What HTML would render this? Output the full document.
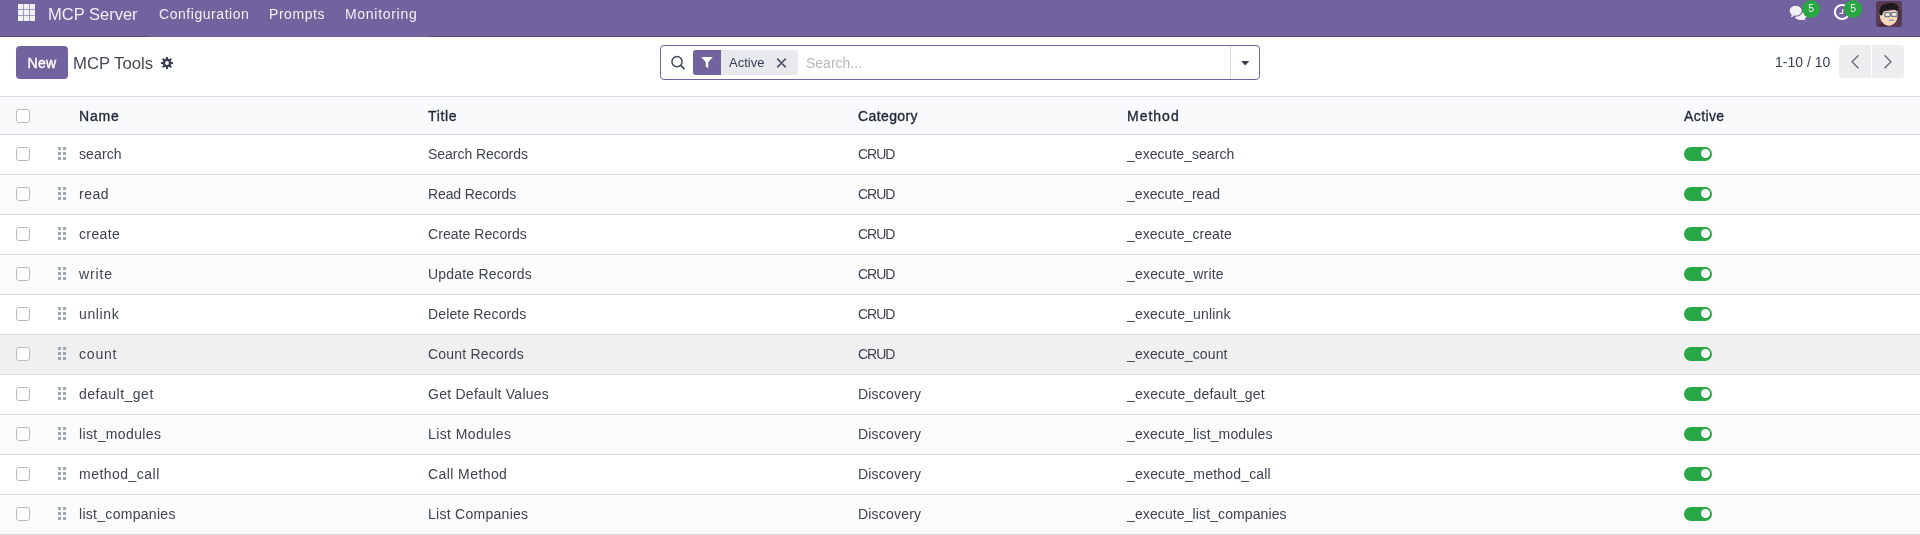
<!DOCTYPE html>
<html><head><meta charset="utf-8">
<style>
*{margin:0;padding:0;box-sizing:border-box}
html,body{width:1920px;height:535px;overflow:hidden;background:#fff;font-family:"Liberation Sans",sans-serif;color:#3d4450}
.abs{position:absolute}
div{will-change:transform}
#nav{position:absolute;left:0;top:0;width:1920px;height:37px;background:#71639e}
#navline1{position:absolute;left:0;top:36px;width:149px;height:1px;background:#594d84}
#navline2{position:absolute;left:428px;top:36px;width:1492px;height:1px;background:#594d84}
.navt{position:absolute;top:0px;height:36px;line-height:28px;color:#f1f0f5;white-space:nowrap}
.t{position:absolute;white-space:nowrap;font-size:14px;line-height:40px;height:40px;color:#3d4450}
.hd{position:absolute;white-space:nowrap;font-size:14px;letter-spacing:0.4px;will-change:transform;-webkit-text-stroke:0.35px #1f2937;color:#1f2937;line-height:37px;top:98px}
.row{position:absolute;left:0;width:1920px;height:40px;border-bottom:1px solid #d6dbe2}
.cb{position:absolute;left:16px;width:14px;height:14px;border:1px solid #b8bbc0;border-radius:3px;background:#fff}
.drag{position:absolute;left:58px;width:9px;height:13px}
.tog{position:absolute;left:1684px;width:28px;height:14px;border-radius:7px;background:#28a745}
.tog::after{content:"";position:absolute;left:16.6px;top:2.3px;width:9.2px;height:9.2px;border-radius:50%;background:#fff}
</style></head>
<body>
<div id="nav"></div>
<div id="navline1"></div><div id="navline2"></div>
<!-- apps grid -->
<svg class="abs" style="left:18px;top:4px" width="18" height="18" viewBox="0 0 18 18"><g fill="#f1f1f4"><rect x="0.00" y="0.00" width="5.3" height="5.3"/><rect x="5.85" y="0.00" width="5.3" height="5.3"/><rect x="11.70" y="0.00" width="5.3" height="5.3"/><rect x="0.00" y="5.85" width="5.3" height="5.3"/><rect x="5.85" y="5.85" width="5.3" height="5.3"/><rect x="11.70" y="5.85" width="5.3" height="5.3"/><rect x="0.00" y="11.70" width="5.3" height="5.3"/><rect x="5.85" y="11.70" width="5.3" height="5.3"/><rect x="11.70" y="11.70" width="5.3" height="5.3"/></g></svg>
<div class="navt" style="left:47.5px;top:0;font-size:16.5px">MCP Server</div>
<div class="navt" style="left:159px;font-size:14px;letter-spacing:0.55px">Configuration</div>
<div class="navt" style="left:269px;font-size:14px;letter-spacing:0.55px">Prompts</div>
<div class="navt" style="left:345px;font-size:14px;letter-spacing:0.7px">Monitoring</div>

<!-- right icons -->
<svg class="abs" style="left:1788px;top:4px" width="20" height="18" viewBox="0 0 20 18">
<g fill="#f0eff5">
<ellipse cx="12.6" cy="12" rx="6" ry="4"/>
<path d="M15 14.5 L18.6 16.6 L12.5 15.6 Z"/>
</g>
<g fill="#f0eff5" stroke="#71639e" stroke-width="1.1">
<path d="M3.6 10.6 L2.2 14.3 L7 12 Z"/>
<ellipse cx="7.65" cy="6.75" rx="6.6" ry="5.5"/>
</g>
<path d="M3.9 10.3 L2.9 13.3 L6.6 11.4 Z" fill="#f0eff5"/>
</svg>
<div class="abs" style="left:1802px;top:0px;width:18.4px;height:18px;border-radius:9.2px;background:#28a745;color:#f4f4f4;font-size:10.5px;line-height:17px;text-align:center">5</div>
<svg class="abs" style="left:1833px;top:3px" width="18" height="18" viewBox="0 0 18 18">
<circle cx="9" cy="9" r="7.1" fill="none" stroke="#fff" stroke-width="2"/>
<path d="M9.6 6 V10.3 H6.3" fill="none" stroke="#eeeaf4" stroke-width="1.3"/>
</svg>
<div class="abs" style="left:1844px;top:0px;width:18.4px;height:18px;border-radius:9.2px;background:#28a745;color:#f4f4f4;font-size:10.5px;line-height:17px;text-align:center">5</div>
<svg class="abs" style="left:1876px;top:1px" width="26" height="26" viewBox="0 0 26 26">
<rect x="0" y="0" width="26" height="26" rx="2.5" fill="#5b3b54"/>
<path d="M19 14 L25 8 L25 20 Z M3 24 L9 19 L11 26 L3 26Z" fill="#4a2f45"/>
<path d="M4 11 Q2.8 17.5 7 22 Q10 25.3 13.5 24.8 Q18.5 24 21 18.5 Q22.6 13 21.6 8.5 Z" fill="#f5d6bd"/>
<path d="M3.6 14 Q2.6 6.5 6.5 3.8 Q10.5 1.6 16 2 Q21.5 2.4 22.6 6 L22.2 11 Q20 8 15 8.5 Q10 8.4 7.5 10.5 L6 14.5 Z" fill="#1f1a1e"/>
<g fill="none" stroke="#707e8a" stroke-width="1.3"><rect x="8.8" y="11.6" width="5.4" height="4" rx="1"/><rect x="15.3" y="11.4" width="5.8" height="4" rx="1"/><path d="M14.2 13 H15.3"/></g>
<rect x="10" y="12.6" width="3" height="2" fill="#e8eef2"/><rect x="16.6" y="12.4" width="3.2" height="2" fill="#e8eef2"/>
<path d="M12.8 19.3 H18" stroke="#8f959a" stroke-width="1.3"/>
</svg>

<!-- control panel -->
<div class="abs" style="left:16px;top:46px;width:52px;height:33px;border-radius:4px;background:#71639e;color:#fff;font-size:14px;-webkit-text-stroke:0.4px #fff;letter-spacing:0.25px;line-height:35px;text-align:center">New</div>
<div class="abs" style="left:73px;top:47px;height:33px;line-height:33px;font-size:16.7px;color:#434a55;white-space:nowrap">MCP Tools</div>
<svg class="abs" style="left:161px;top:57px" width="12" height="12" viewBox="0 0 12 12">
<g fill="#374151"><circle cx="6" cy="6" r="4.4"/>
<rect x="5" y="0" width="2" height="12"/><rect x="5" y="0" width="2" height="12" transform="rotate(45 6 6)"/><rect x="5" y="0" width="2" height="12" transform="rotate(90 6 6)"/><rect x="5" y="0" width="2" height="12" transform="rotate(135 6 6)"/></g>
<circle cx="6" cy="6" r="1.9" fill="#fff"/>
</svg>

<!-- search -->
<div class="abs" style="left:660px;top:45px;width:600px;height:35px;border:1px solid #71639e;border-radius:4px"></div>
<div class="abs" style="left:1230px;top:46px;width:1px;height:33px;background:#d8dadd"></div>
<svg class="abs" style="left:670px;top:55px" width="16" height="16" viewBox="0 0 16 16">
<circle cx="7" cy="6.6" r="5.1" fill="none" stroke="#374151" stroke-width="1.4"/>
<path d="M10.7 10.3 L14.4 14.1" stroke="#374151" stroke-width="1.6"/>
</svg>
<div class="abs" style="left:693px;top:50px;width:105px;height:25px;border-radius:3px;background:#e7e9ed"></div>
<div class="abs" style="left:693px;top:50px;width:28px;height:25px;border-radius:3px 0 0 3px;background:#71639e"></div>
<svg class="abs" style="left:701px;top:57px" width="12" height="12" viewBox="0 0 12 12">
<path fill="#fff" d="M0.3 0 H11.7 L7.2 5.2 V11.3 L4.8 9.6 V5.2 Z"/>
</svg>
<div class="abs" style="left:729px;top:50px;height:25px;line-height:25px;font-size:13px;color:#374151">Active</div>
<svg class="abs" style="left:776px;top:58px" width="11" height="10" viewBox="0 0 11 10">
<path d="M1.2 0.6 L9.8 9.4 M9.8 0.6 L1.2 9.4" stroke="#555b66" stroke-width="1.7"/>
</svg>
<div class="abs" style="left:806px;top:47px;height:33px;line-height:33px;font-size:14px;color:#b4b8bf">Search...</div>
<svg class="abs" style="left:1241px;top:60px" width="9" height="6" viewBox="0 0 9 6">
<path fill="#3b4048" d="M0.1 1 H8.3 L4.2 5.4 Z"/>
</svg>

<!-- pager -->
<div class="abs" style="left:1775px;top:46px;height:33px;line-height:33px;font-size:14px;color:#374151;white-space:nowrap">1-10 / 10</div>
<div class="abs" style="left:1839px;top:45px;width:65px;height:33px;border-radius:4px;background:#eceef0"></div>
<div class="abs" style="left:1871px;top:45px;width:1px;height:33px;background:#fff"></div>
<svg class="abs" style="left:1850px;top:55px" width="10" height="15" viewBox="0 0 10 15">
<path d="M8.5 0.3 L2 6.8 L8.5 13.3" fill="none" stroke="#63666d" stroke-width="1.3"/>
</svg>
<svg class="abs" style="left:1883px;top:55px" width="10" height="15" viewBox="0 0 10 15">
<path d="M1.5 0.3 L8 6.8 L1.5 13.3" fill="none" stroke="#63666d" stroke-width="1.3"/>
</svg>

<!-- table header -->
<div class="abs" style="left:0;top:96px;width:1920px;height:39px;background:#f9fafb;border-top:1px solid #d6dbe2;border-bottom:1px solid #d6dbe2"></div>
<div class="cb" style="top:109px"></div>
<div class="hd" style="left:78.8px;letter-spacing:0.8px">Name</div>
<div class="hd" style="left:428px;letter-spacing:0.65px">Title</div>
<div class="hd" style="left:858px">Category</div>
<div class="hd" style="left:1127px;letter-spacing:1px">Method</div>
<div class="hd" style="left:1684px">Active</div>

<!--ROWS-->
<div class="row" style="top:135px;background:#fff"></div>
<div class="cb" style="top:147px"></div>
<svg class="drag" style="top:147px" width="9" height="13"><g fill="#9fa7b1"><rect x="0" y="0" width="3" height="3"/><rect x="5" y="0" width="3" height="3"/><rect x="0" y="5" width="3" height="3"/><rect x="5" y="5" width="3" height="3"/><rect x="0" y="10" width="3" height="3"/><rect x="5" y="10" width="3" height="3"/></g></svg>
<div class="t" id="t0_0" style="left:79px;top:134px;letter-spacing:0.120px">search</div>
<div class="t" id="t0_1" style="left:428px;top:134px;letter-spacing:-0.031px">Search Records</div>
<div class="t" id="t0_2" style="left:858px;top:134px;letter-spacing:-1.000px">CRUD</div>
<div class="t" id="t0_3" style="left:1127px;top:134px;letter-spacing:0.043px">_execute_search</div>
<div class="tog" style="top:147px"></div>
<div class="row" style="top:175px;background:#fbfbfb"></div>
<div class="cb" style="top:187px"></div>
<svg class="drag" style="top:187px" width="9" height="13"><g fill="#9fa7b1"><rect x="0" y="0" width="3" height="3"/><rect x="5" y="0" width="3" height="3"/><rect x="0" y="5" width="3" height="3"/><rect x="5" y="5" width="3" height="3"/><rect x="0" y="10" width="3" height="3"/><rect x="5" y="10" width="3" height="3"/></g></svg>
<div class="t" id="t1_0" style="left:79px;top:174px;letter-spacing:0.533px">read</div>
<div class="t" id="t1_1" style="left:428px;top:174px;letter-spacing:-0.109px">Read Records</div>
<div class="t" id="t1_2" style="left:858px;top:174px;letter-spacing:-1.000px">CRUD</div>
<div class="t" id="t1_3" style="left:1127px;top:174px;letter-spacing:0.033px">_execute_read</div>
<div class="tog" style="top:187px"></div>
<div class="row" style="top:215px;background:#fff"></div>
<div class="cb" style="top:227px"></div>
<svg class="drag" style="top:227px" width="9" height="13"><g fill="#9fa7b1"><rect x="0" y="0" width="3" height="3"/><rect x="5" y="0" width="3" height="3"/><rect x="0" y="5" width="3" height="3"/><rect x="5" y="5" width="3" height="3"/><rect x="0" y="10" width="3" height="3"/><rect x="5" y="10" width="3" height="3"/></g></svg>
<div class="t" id="t2_0" style="left:79px;top:214px;letter-spacing:0.360px">create</div>
<div class="t" id="t2_1" style="left:428px;top:214px;letter-spacing:0.061px">Create Records</div>
<div class="t" id="t2_2" style="left:858px;top:214px;letter-spacing:-1.000px">CRUD</div>
<div class="t" id="t2_3" style="left:1127px;top:214px;letter-spacing:0.086px">_execute_create</div>
<div class="tog" style="top:227px"></div>
<div class="row" style="top:255px;background:#fbfbfb"></div>
<div class="cb" style="top:267px"></div>
<svg class="drag" style="top:267px" width="9" height="13"><g fill="#9fa7b1"><rect x="0" y="0" width="3" height="3"/><rect x="5" y="0" width="3" height="3"/><rect x="0" y="5" width="3" height="3"/><rect x="5" y="5" width="3" height="3"/><rect x="0" y="10" width="3" height="3"/><rect x="5" y="10" width="3" height="3"/></g></svg>
<div class="t" id="t3_0" style="left:79px;top:254px;letter-spacing:0.900px">write</div>
<div class="t" id="t3_1" style="left:428px;top:254px;letter-spacing:0.200px">Update Records</div>
<div class="t" id="t3_2" style="left:858px;top:254px;letter-spacing:-1.000px">CRUD</div>
<div class="t" id="t3_3" style="left:1127px;top:254px;letter-spacing:0.185px">_execute_write</div>
<div class="tog" style="top:267px"></div>
<div class="row" style="top:295px;background:#fff"></div>
<div class="cb" style="top:307px"></div>
<svg class="drag" style="top:307px" width="9" height="13"><g fill="#9fa7b1"><rect x="0" y="0" width="3" height="3"/><rect x="5" y="0" width="3" height="3"/><rect x="0" y="5" width="3" height="3"/><rect x="5" y="5" width="3" height="3"/><rect x="0" y="10" width="3" height="3"/><rect x="5" y="10" width="3" height="3"/></g></svg>
<div class="t" id="t4_0" style="left:79px;top:294px;letter-spacing:0.640px">unlink</div>
<div class="t" id="t4_1" style="left:428px;top:294px;letter-spacing:0.139px">Delete Records</div>
<div class="t" id="t4_2" style="left:858px;top:294px;letter-spacing:-1.000px">CRUD</div>
<div class="t" id="t4_3" style="left:1127px;top:294px;letter-spacing:0.157px">_execute_unlink</div>
<div class="tog" style="top:307px"></div>
<div class="row" style="top:335px;background:#f0f0f0"></div>
<div class="cb" style="top:347px"></div>
<svg class="drag" style="top:347px" width="9" height="13"><g fill="#9fa7b1"><rect x="0" y="0" width="3" height="3"/><rect x="5" y="0" width="3" height="3"/><rect x="0" y="5" width="3" height="3"/><rect x="5" y="5" width="3" height="3"/><rect x="0" y="10" width="3" height="3"/><rect x="5" y="10" width="3" height="3"/></g></svg>
<div class="t" id="t5_0" style="left:79px;top:334px;letter-spacing:0.800px">count</div>
<div class="t" id="t5_1" style="left:428px;top:334px;letter-spacing:0.200px">Count Records</div>
<div class="t" id="t5_2" style="left:858px;top:334px;letter-spacing:-1.000px">CRUD</div>
<div class="t" id="t5_3" style="left:1127px;top:334px;letter-spacing:0.123px">_execute_count</div>
<div class="tog" style="top:347px"></div>
<div class="row" style="top:375px;background:#fff"></div>
<div class="cb" style="top:387px"></div>
<svg class="drag" style="top:387px" width="9" height="13"><g fill="#9fa7b1"><rect x="0" y="0" width="3" height="3"/><rect x="5" y="0" width="3" height="3"/><rect x="0" y="5" width="3" height="3"/><rect x="5" y="5" width="3" height="3"/><rect x="0" y="10" width="3" height="3"/><rect x="5" y="10" width="3" height="3"/></g></svg>
<div class="t" id="t6_0" style="left:79px;top:374px;letter-spacing:0.500px">default_get</div>
<div class="t" id="t6_1" style="left:428px;top:374px;letter-spacing:0.259px">Get Default Values</div>
<div class="t" id="t6_2" style="left:858px;top:374px;letter-spacing:0.199px">Discovery</div>
<div class="t" id="t6_3" style="left:1127px;top:374px;letter-spacing:0.200px">_execute_default_get</div>
<div class="tog" style="top:387px"></div>
<div class="row" style="top:415px;background:#fbfbfb"></div>
<div class="cb" style="top:427px"></div>
<svg class="drag" style="top:427px" width="9" height="13"><g fill="#9fa7b1"><rect x="0" y="0" width="3" height="3"/><rect x="5" y="0" width="3" height="3"/><rect x="0" y="5" width="3" height="3"/><rect x="5" y="5" width="3" height="3"/><rect x="0" y="10" width="3" height="3"/><rect x="5" y="10" width="3" height="3"/></g></svg>
<div class="t" id="t7_0" style="left:79px;top:414px;letter-spacing:0.382px">list_modules</div>
<div class="t" id="t7_1" style="left:428px;top:414px;letter-spacing:0.400px">List Modules</div>
<div class="t" id="t7_2" style="left:858px;top:414px;letter-spacing:0.199px">Discovery</div>
<div class="t" id="t7_3" style="left:1127px;top:414px;letter-spacing:0.150px">_execute_list_modules</div>
<div class="tog" style="top:427px"></div>
<div class="row" style="top:455px;background:#fff"></div>
<div class="cb" style="top:467px"></div>
<svg class="drag" style="top:467px" width="9" height="13"><g fill="#9fa7b1"><rect x="0" y="0" width="3" height="3"/><rect x="5" y="0" width="3" height="3"/><rect x="0" y="5" width="3" height="3"/><rect x="5" y="5" width="3" height="3"/><rect x="0" y="10" width="3" height="3"/><rect x="5" y="10" width="3" height="3"/></g></svg>
<div class="t" id="t8_0" style="left:79px;top:454px;letter-spacing:0.480px">method_call</div>
<div class="t" id="t8_1" style="left:428px;top:454px;letter-spacing:0.420px">Call Method</div>
<div class="t" id="t8_2" style="left:858px;top:454px;letter-spacing:0.199px">Discovery</div>
<div class="t" id="t8_3" style="left:1127px;top:454px;letter-spacing:0.190px">_execute_method_call</div>
<div class="tog" style="top:467px"></div>
<div class="row" style="top:495px;background:#fbfbfb"></div>
<div class="cb" style="top:507px"></div>
<svg class="drag" style="top:507px" width="9" height="13"><g fill="#9fa7b1"><rect x="0" y="0" width="3" height="3"/><rect x="5" y="0" width="3" height="3"/><rect x="0" y="5" width="3" height="3"/><rect x="5" y="5" width="3" height="3"/><rect x="0" y="10" width="3" height="3"/><rect x="5" y="10" width="3" height="3"/></g></svg>
<div class="t" id="t9_0" style="left:79px;top:494px;letter-spacing:0.293px">list_companies</div>
<div class="t" id="t9_1" style="left:428px;top:494px;letter-spacing:0.277px">List Companies</div>
<div class="t" id="t9_2" style="left:858px;top:494px;letter-spacing:0.199px">Discovery</div>
<div class="t" id="t9_3" style="left:1127px;top:494px;letter-spacing:0.109px">_execute_list_companies</div>
<div class="tog" style="top:507px"></div>
<!--/ROWS-->
</body></html>
